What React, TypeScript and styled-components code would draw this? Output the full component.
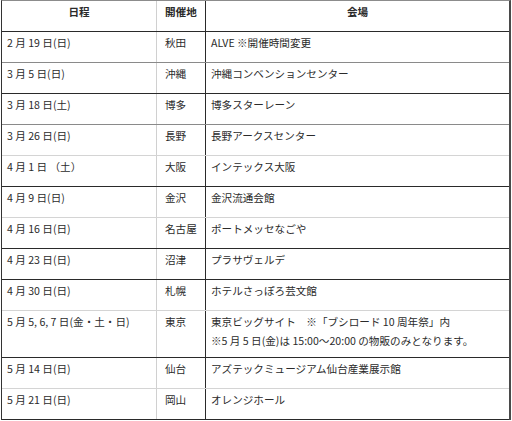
import React from "react";
import styled, { createGlobalStyle } from "styled-components";

type Tone = "dark" | "mid" | "light";

interface EventRow {
  date: string;
  city: string;
  venue: string[];
  tone: Tone;
  tall?: boolean;
}

const rows: EventRow[] = [
  { date: "2 月 19 日(日)", city: "秋田", venue: ["ALVE ※開催時間変更"], tone: "mid" },
  { date: "3 月 5 日(日)", city: "沖縄", venue: ["沖縄コンベンションセンター"], tone: "dark" },
  { date: "3 月 18 日(土)", city: "博多", venue: ["博多スターレーン"], tone: "mid" },
  { date: "3 月 26 日(日)", city: "長野", venue: ["長野アークスセンター"], tone: "light" },
  { date: "4 月 1 日 （土）", city: "大阪", venue: ["インテックス大阪"], tone: "dark" },
  { date: "4 月 9 日(日)", city: "金沢", venue: ["金沢流通会館"], tone: "light" },
  { date: "4 月 16 日(日)", city: "名古屋", venue: ["ポートメッセなごや"], tone: "dark" },
  { date: "4 月 23 日(日)", city: "沼津", venue: ["プラサヴェルデ"], tone: "dark" },
  { date: "4 月 30 日(日)", city: "札幌", venue: ["ホテルさっぽろ芸文館"], tone: "light" },
  {
    date: "5 月 5, 6, 7 日(金・土・日)",
    city: "東京",
    venue: ["東京ビッグサイト　※「ブシロード 10 周年祭」内", "※5 月 5 日(金)は 15:00～20:00 の物販のみとなります。"],
    tone: "dark",
    tall: true,
  },
  { date: "5 月 14 日(日)", city: "仙台", venue: ["アズテックミュージアム仙台産業展示館"], tone: "light" },
  { date: "5 月 21 日(日)", city: "岡山", venue: ["オレンジホール"], tone: "dark" },
];

const toneColor: Record<Tone, string> = {
  dark: "#2a2a2a",
  mid: "#8a8a8a",
  light: "#d4d4d4",
};

const App: React.FC = () => (
  <>
    <GlobalStyle />
    <Page>
      <Schedule>
        <Row $tone="dark">
          <HeadCell $align="center">日程</HeadCell>
          <HeadCell $align="left" $mid>開催地</HeadCell>
          <HeadCell $align="center" $last>会場</HeadCell>
        </Row>
        {rows.map((r) => (
          <Row key={r.date} $tone={r.tone} $tall={r.tall}>
            <DateCell>{r.date}</DateCell>
            <CityCell>{r.city}</CityCell>
            <VenueCell>
              {r.venue.map((line) => (
                <div key={line}>{line}</div>
              ))}
            </VenueCell>
          </Row>
        ))}
      </Schedule>
    </Page>
  </>
);

const GlobalStyle = createGlobalStyle`
  html, body {
    margin: 0;
    padding: 0;
    background: #ffffff;
  }
  body {
    font-family: "Noto Sans CJK JP", "Noto Sans", sans-serif;
    color: #2b2b2b;
  }
`;

const Page = styled.div`
  width: 512px;
  height: 421px;
  padding-left: 1px;
  box-sizing: border-box;
  overflow: hidden;
`;

const Schedule = styled.div`
  width: 510px;
  box-sizing: border-box;
  border-top: 1px solid #8c8c8c;
  border-left: 1px solid #333;
  border-right: 2px solid #4a4a4a;
  display: flex;
  flex-direction: column;
`;

const Row = styled.div<{ $tone: Tone; $tall?: boolean }>`
  display: grid;
  grid-template-columns: 155px 49px 1fr;
  height: ${(p) => (p.$tall ? 47 : 31)}px;
  box-sizing: border-box;
  border-bottom: 1px solid ${(p) => toneColor[p.$tone]};
  font-size: 10.6px;
  line-height: 19px;
`;

const Cell = styled.div`
  padding-top: 1px;
  white-space: nowrap;
  overflow: hidden;
`;

const HeadCell = styled(Cell)<{ $align: "left" | "center"; $mid?: boolean; $last?: boolean }>`
  font-weight: 700;
  text-align: ${(p) => p.$align};
  padding-left: ${(p) => (p.$mid ? 8 : 0)}px;
  border-right: ${(p) =>
    p.$last ? "none" : p.$mid ? "1px solid #2a2a2a" : "1px solid #d0d0d0"};
`;

const DateCell = styled(Cell)`
  padding-left: 5px;
  border-right: 1px solid #d0d0d0;
`;

const CityCell = styled(Cell)`
  padding-left: 8px;
  border-right: 1px solid #2a2a2a;
`;

const VenueCell = styled(Cell)`
  padding-left: 5px;
`;

export default App;
